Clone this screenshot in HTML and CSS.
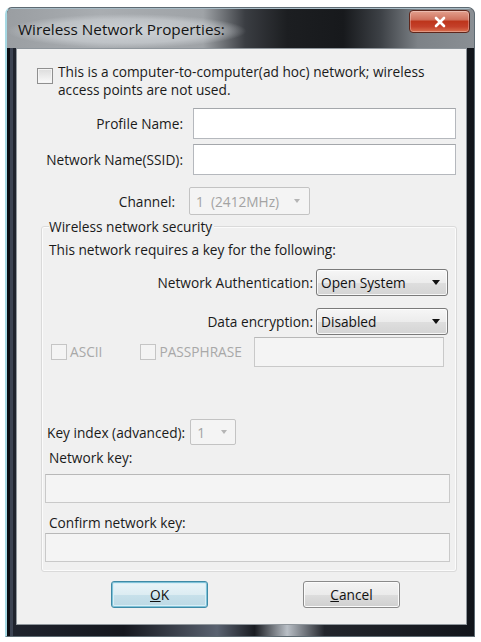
FILE: index.html
```html
<!DOCTYPE html>
<html>
<head>
<meta charset="utf-8">
<link rel="stylesheet" href="styles.css">
</head>
<body>
<div class="window">
  <div class="caption-bar">
    <svg class="caption-bg" width="468" height="40" viewBox="0 0 468 40" preserveAspectRatio="none">
      <defs>
        <linearGradient id="cg" x1="0" y1="0" x2="1" y2="0">
          <stop offset="0" stop-color="#9a9ea2"/>
          <stop offset="0.2" stop-color="#a9adb1"/>
          <stop offset="0.42" stop-color="#9fa3a7"/>
          <stop offset="0.51" stop-color="#3a3d42"/>
          <stop offset="0.6" stop-color="#1c1e21"/>
          <stop offset="0.72" stop-color="#17191c"/>
          <stop offset="0.8" stop-color="#3d4146"/>
          <stop offset="0.88" stop-color="#7d8287"/>
          <stop offset="1" stop-color="#8a8f94"/>
        </linearGradient>
        <radialGradient id="glow" cx="0.5" cy="0.5" r="0.5">
          <stop offset="0" stop-color="#d0d4d8" stop-opacity="0.95"/>
          <stop offset="0.7" stop-color="#c4c8cc" stop-opacity="0.8"/>
          <stop offset="1" stop-color="#c4c8cc" stop-opacity="0"/>
        </radialGradient>
      </defs>
      <rect x="0" y="0" width="468" height="40" fill="url(#cg)"/>
      <rect x="0" y="6" width="240" height="34" fill="url(#glow)"/>
      <rect x="0" y="0" width="468" height="1" fill="#a9bcc6"/>
    </svg>
    <span class="caption-text">Wireless Network Properties:</span>
    <div class="close-btn">
      <svg width="14" height="12" viewBox="0 0 14 12"><path d="M3 2 L11 10 M11 2 L3 10" stroke="#fff" stroke-width="2.6" stroke-linecap="round"/></svg>
    </div>
  </div>
  <div class="frame">
    <div class="client">
      <div class="adhoc">
        <span class="cb"></span>
        <p class="adhoc-text">This is a computer-to-computer(ad hoc) network; wireless<br>access points are not used.</p>
      </div>
      <div class="row row-profile">
        <span class="lbl lbl-wide">Profile Name:</span>
        <div class="textbox"></div>
      </div>
      <div class="row row-ssid">
        <span class="lbl lbl-wide">Network Name(SSID):</span>
        <div class="textbox"></div>
      </div>
      <div class="row row-channel">
        <span class="lbl lbl-channel">Channel:</span>
        <div class="select disabled sel-channel"><span>1&nbsp;&nbsp;(2412MHz)</span><span class="arrow"></span></div>
      </div>
      <div class="group">
        <div class="legend">Wireless network security</div>
        <p class="requires">This network requires a key for the following:</p>
        <div class="row row-right row-auth">
          <span class="lbl">Network Authentication:</span>
          <div class="select sel-wide"><span>Open System</span><span class="arrow"></span></div>
        </div>
        <div class="row row-right row-enc">
          <span class="lbl">Data encryption:</span>
          <div class="select sel-wide"><span>Disabled</span><span class="arrow"></span></div>
        </div>
        <div class="row row-ascii">
          <span class="cb cb-dis"></span><span class="dis-text ascii">ASCII</span>
          <span class="cb cb-dis cb-pass"></span><span class="dis-text">PASSPHRASE</span>
          <div class="textbox tb-dis tb-pass"></div>
        </div>
        <div class="row row-keyindex">
          <span class="lbl">Key index (advanced):</span>
          <div class="select disabled sel-key"><span>1</span><span class="arrow"></span></div>
        </div>
        <p class="field-label netkey">Network key:</p>
        <div class="textbox tb-dis tb-full"></div>
        <p class="field-label confirm">Confirm network key:</p>
        <div class="textbox tb-dis tb-full"></div>
      </div>
      <div class="buttons">
        <div class="btn btn-default"><span><u>O</u>K</span></div>
        <div class="btn btn-cancel"><span><u>C</u>ancel</span></div>
      </div>
    </div>
  </div>
</div>
</body>
</html>
```

FILE: styles.css
```css
html, body {
  margin: 0;
  background: #ffffff;
}
body {
  padding: 7px 0 0 5px;
  font-family: "Open Sans", "DejaVu Sans", sans-serif;
  font-size: 13.7px;
  color: #1a1a1a;
}
p { margin: 0; }

.window {
  width: 470px;
  height: 630px;
  box-sizing: border-box;
  display: flex;
  flex-direction: column;
  border-radius: 7px 7px 0 0;
  overflow: hidden;
  border: 1px solid #5d6a72;
  border-left: 2px solid #a6d9e4;
  background-color: #1c2029;
}

.caption-bar {
  position: relative;
  flex: none;
  height: 40px;
  display: flex;
  justify-content: space-between;
  align-items: flex-start;
  background-color: #6c7075;
}
.caption-bg {
  position: absolute;
  left: 0;
  top: 0;
  width: 100%;
  height: 100%;
  display: block;
}
.caption-text {
  position: relative;
  margin: 12px 0 0 11px;
  font-size: 15.3px;
  line-height: 19px;
  color: #141414;
}
.close-btn {
  position: relative;
  width: 61px;
  height: 23px;
  margin: 2px 4px 0 0;
  box-sizing: border-box;
  border: 1px solid #5e261b;
  border-radius: 4px;
  display: flex;
  align-items: center;
  justify-content: center;
  background: linear-gradient(to bottom, #e3a08e, #d07460 40%, #bd351c 50%, #c4402a 75%, #d9704f);
  box-shadow: inset 0 0 0 1px rgba(255,255,255,0.3);
}

.frame {
  flex: 1;
  display: flex;
  padding: 0 7px 11px 9px;
  background-color: #181b22;
  background-image: linear-gradient(90deg, #20242e 0%, #15171e 25%, #5a6270 45%, #191c22 53%, #b9bfc6 60%, #22252c 68%, #12151b 100%);
  box-shadow: inset 3px 0 0 #0b0d12, inset 6px 0 0 #3c4352;
}

.client {
  flex: 1;
  background: #f0f0f0;
  border: 1px solid #8f969c;
  display: flex;
  flex-direction: column;
  box-sizing: border-box;
}

.cb {
  display: block;
  flex: none;
  width: 14px;
  height: 14px;
  border: 1px solid #8f8f8f;
  background: linear-gradient(to bottom, #dcdcdc, #fafafa);
  box-shadow: inset 0 0 0 1px #f4f4f4;
}
.cb-dis {
  border-color: #c5c5c5;
  background: #f4f4f4;
}

.adhoc {
  display: flex;
  margin: 14px 0 0 20px;
}
.adhoc .cb { margin-top: 5px; }
.adhoc-text {
  margin-left: 5px;
  line-height: 18px;
}

.row {
  display: flex;
  align-items: center;
}
.lbl { white-space: nowrap; }
.lbl-wide {
  width: 166px;
  text-align: right;
  margin-right: 10px;
}
.lbl-channel {
  width: 158px;
  text-align: right;
  margin-right: 14px;
}

.textbox {
  box-sizing: border-box;
  width: 263px;
  height: 31px;
  background: #fff;
  border: 1px solid #b5b8bd;
  border-top-color: #a4a7ab;
}
.row-profile { margin-top: 9px; }
.row-ssid { margin-top: 5px; }
.row-channel { margin-top: 12px; }

.select {
  box-sizing: border-box;
  height: 27px;
  border: 1px solid #7a7a7a;
  border-radius: 3px;
  display: flex;
  align-items: center;
  justify-content: space-between;
  padding: 0 7px 0 4px;
  background: linear-gradient(to bottom, #f6f6f6, #ececec 50%, #dedede 52%, #d4d4d4);
  box-shadow: inset 0 0 0 1px rgba(255,255,255,0.8);
  color: #111;
}
.arrow {
  width: 0;
  height: 0;
  border-left: 4px solid transparent;
  border-right: 4px solid transparent;
  border-top: 5px solid #111;
}
.select.disabled {
  border-color: #c3c3c3;
  border-radius: 2px;
  background: #f4f4f4;
  box-shadow: none;
  color: #a3a3a3;
}
.select.disabled .arrow {
  border-top-color: #b5b5b5;
  border-left-width: 3px;
  border-right-width: 3px;
  border-top-width: 4px;
}
.sel-channel {
  width: 121px;
  height: 28px;
  padding-left: 6px;
  padding-right: 9px;
}

.group {
  margin: 11px 0 0 24px;
  width: 416px;
  height: 346px;
  box-sizing: border-box;
  border: 1px solid #dadada;
  border-radius: 3px;
  padding: 0 0 0 7px;
  display: flex;
  flex-direction: column;
  box-shadow: inset 0 0 0 1px #fbfbfb;
}
.legend {
  margin: -9px 0 0 0;
  line-height: 17px;
  align-self: flex-start;
  background: #f0f0f0;
  padding-right: 2px;
}
.requires {
  margin-top: 6px;
  line-height: 17px;
}
.row-right {
  justify-content: flex-end;
  padding-right: 8px;
}
.row-right .lbl { margin-right: 3px; }
.sel-wide {
  width: 132px;
  height: 27px;
}
.row-auth { margin-top: 11px; }
.row-enc { margin-top: 12px; }

.row-ascii {
  align-items: flex-start;
  margin-top: 2px;
  margin-left: 2px;
}
.row-ascii .cb { margin-top: 7px; }
.dis-text {
  color: #a8a8a8;
  margin-left: 3px;
  line-height: 18px;
  margin-top: 6px;
}
.ascii { margin-right: 38px; }
.tb-dis {
  background: #f4f4f4;
  border-color: #c9c9c9;
  border-top-color: #b8b8b8;
}
.tb-pass {
  width: 190px;
  height: 30px;
  margin-left: 12px;
}

.row-keyindex {
  margin-top: 52px;
  margin-left: -2px;
}
.row-keyindex .lbl { margin-right: 5px; }
.sel-key {
  width: 46px;
  height: 26px;
  padding-left: 6px;
  padding-right: 8px;
}
.field-label {
  line-height: 17px;
}
.netkey { margin-top: 4px; }
.confirm { margin-top: 11px; }
.tb-full {
  width: 405px;
  height: 29px;
  margin-left: -4px;
}
.netkey + .tb-full { margin-top: 8px; }
.confirm + .tb-full { margin-top: 2px; }

.buttons {
  display: flex;
  margin: 9px 0 0 94px;
}
.btn {
  box-sizing: border-box;
  height: 27px;
  border-radius: 3px;
  display: flex;
  align-items: center;
  justify-content: center;
  color: #111;
}
.btn-default {
  width: 97px;
  border: 1px solid #3e8aa6;
  background: linear-gradient(to bottom, #eaf5f9, #dcecf2 50%, #c7e0ea 52%, #bcd9e4);
  box-shadow: inset 0 0 0 1px #7fc2d8, inset 0 0 0 2px #d8eef6;
}
.btn-cancel {
  width: 97px;
  margin-left: 95px;
  border: 1px solid #8a8a8a;
  background: linear-gradient(to bottom, #f3f3f3, #ebebeb 50%, #dddddd 52%, #cfcfcf);
  box-shadow: inset 0 0 0 1px #fbfbfb;
}
```
